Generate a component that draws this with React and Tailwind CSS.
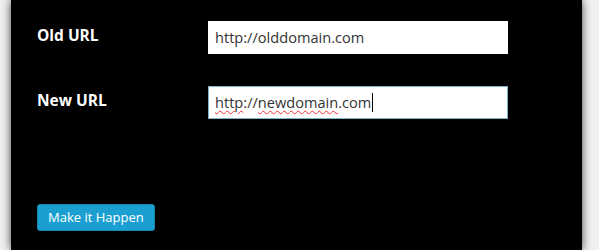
import React from 'react';

const font = { fontFamily: '"Open Sans", "Noto Sans", sans-serif' };

const Field = ({ label, children, focused }) => (
  <div className="flex items-center">
    <label className="w-[171px] text-[15.5px] font-bold text-white leading-none -mt-[4px]">{label}</label>
    <div
      className={
        'w-[300px] h-[33px] bg-white flex items-center pl-[6px] text-[14.6px] text-[#333] border ' +
        (focused ? 'border-[#7ab3cc]' : 'border-white')
      }
    >
      {children}
    </div>
  </div>
);

export default function App() {
  return (
    <div className="w-[599px] h-[250px] bg-[#f1f1f1] overflow-hidden" style={font}>
      <div className="ml-[11px] w-[571px] h-[250px] bg-black shadow-[0_0_9px_rgba(0,0,0,0.75)] pl-[26px] pt-[21px] flex flex-col">
        <div className="flex flex-col gap-[32px]">
          <Field label="Old URL">http://olddomain.com</Field>
          <Field label="New URL" focused>
            <span className="underline decoration-wavy decoration-red-500 decoration-1 underline-offset-2">http</span>
            <span>://</span>
            <span className="underline decoration-wavy decoration-red-500 decoration-1 underline-offset-2">newdomain</span>
            <span>.com</span>
            <span className="inline-block w-px h-[19px] bg-black ml-px"></span>
          </Field>
        </div>
        <div className="mt-[85px]">
          <button className="h-[27px] px-[10px] bg-[#1b9fd0] rounded-[3px] text-white text-[13px] leading-none border border-[#1786b0]">
            Make it Happen
          </button>
        </div>
      </div>
    </div>
  );
}
